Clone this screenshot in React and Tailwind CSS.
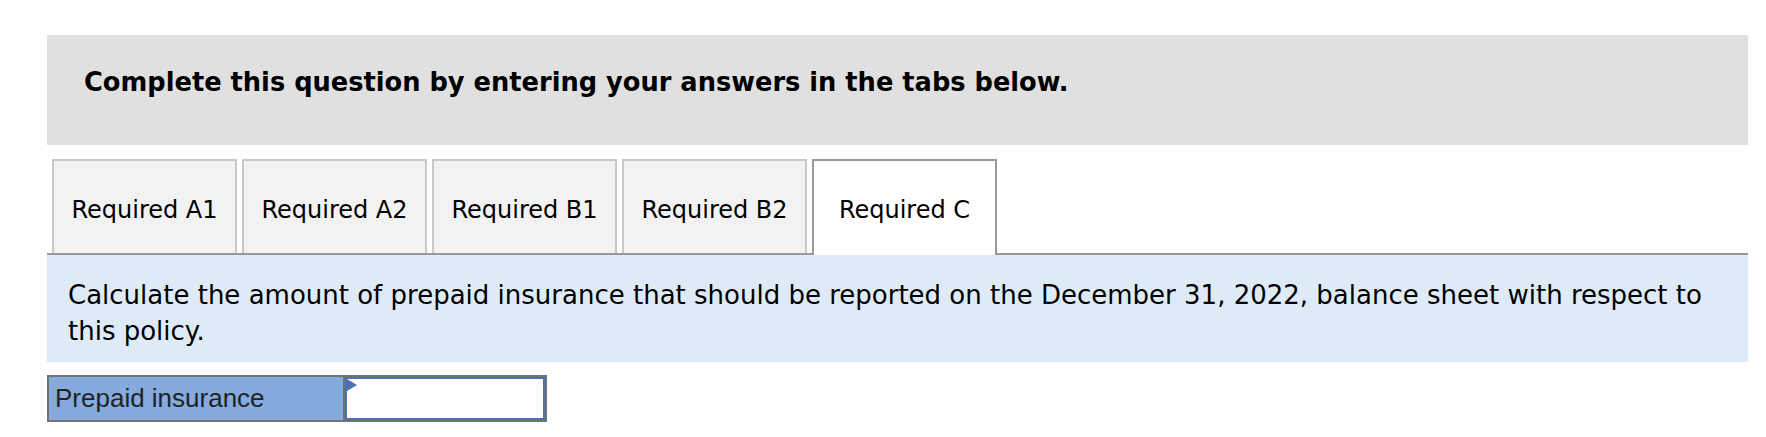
import React from 'react';

const tabs = ['Required A1', 'Required A2', 'Required B1', 'Required B2', 'Required C'];

const App = () => {
  const active = 'Required C';

  return (
    <div className="min-h-[437px] bg-white pt-[35px] pl-[47px] pr-[18px] font-['DejaVu_Sans',Verdana,sans-serif] text-black">
      <div className="flex h-[110px] items-center bg-[#e0e0e0] pb-[16px] pl-[37px]">
        <h2 className="text-[25.7px] font-bold">Complete this question by entering your answers in the tabs below.</h2>
      </div>

      {/* Tabs */}
      <div className="mt-[14px] flex items-start gap-[5px] border-b-2 border-[#999999] pl-[5px] text-[24px]">
        {tabs.map(tab =>
          tab === active ? (
            <div
              key={tab}
              className="-mb-[2px] flex h-[96px] w-[185px] items-center justify-center border-2 border-b-0 border-[#999999] bg-white pt-[4px]"
            >
              {tab}
            </div>
          ) : (
            <div
              key={tab}
              className="flex h-[94px] w-[185px] items-center justify-center border-2 border-b-0 border-[#c8c8c8] bg-[#f2f2f2] pt-[5px]"
            >
              {tab}
            </div>
          )
        )}
      </div>

      <div className="bg-[#deebf7] px-[21px] pt-[22px] pb-[13px] text-[26px] leading-[36px]">
        Calculate the amount of prepaid insurance that should be reported on the December 31, 2022, balance sheet with respect to this policy.
      </div>

      {/* Answer row */}
      <div className="mt-[13px] flex h-[47px] w-[500px] border-2 border-[#727272]">
        <div className="flex w-[296px] items-center border-r-2 border-[#727272] bg-[#85abde] pl-[6px] font-['Liberation_Sans',Arial,sans-serif] text-[26px] text-[#222222]">
          Prepaid insurance
        </div>
        <div className="relative flex-1 border-2 border-[#4a71b3] bg-white">
          <span className="absolute left-0 top-0 h-0 w-0 border-y-[6px] border-l-[10px] border-y-transparent border-l-[#4a71b3]"></span>
        </div>
      </div>
    </div>
  );
};

export default App;
